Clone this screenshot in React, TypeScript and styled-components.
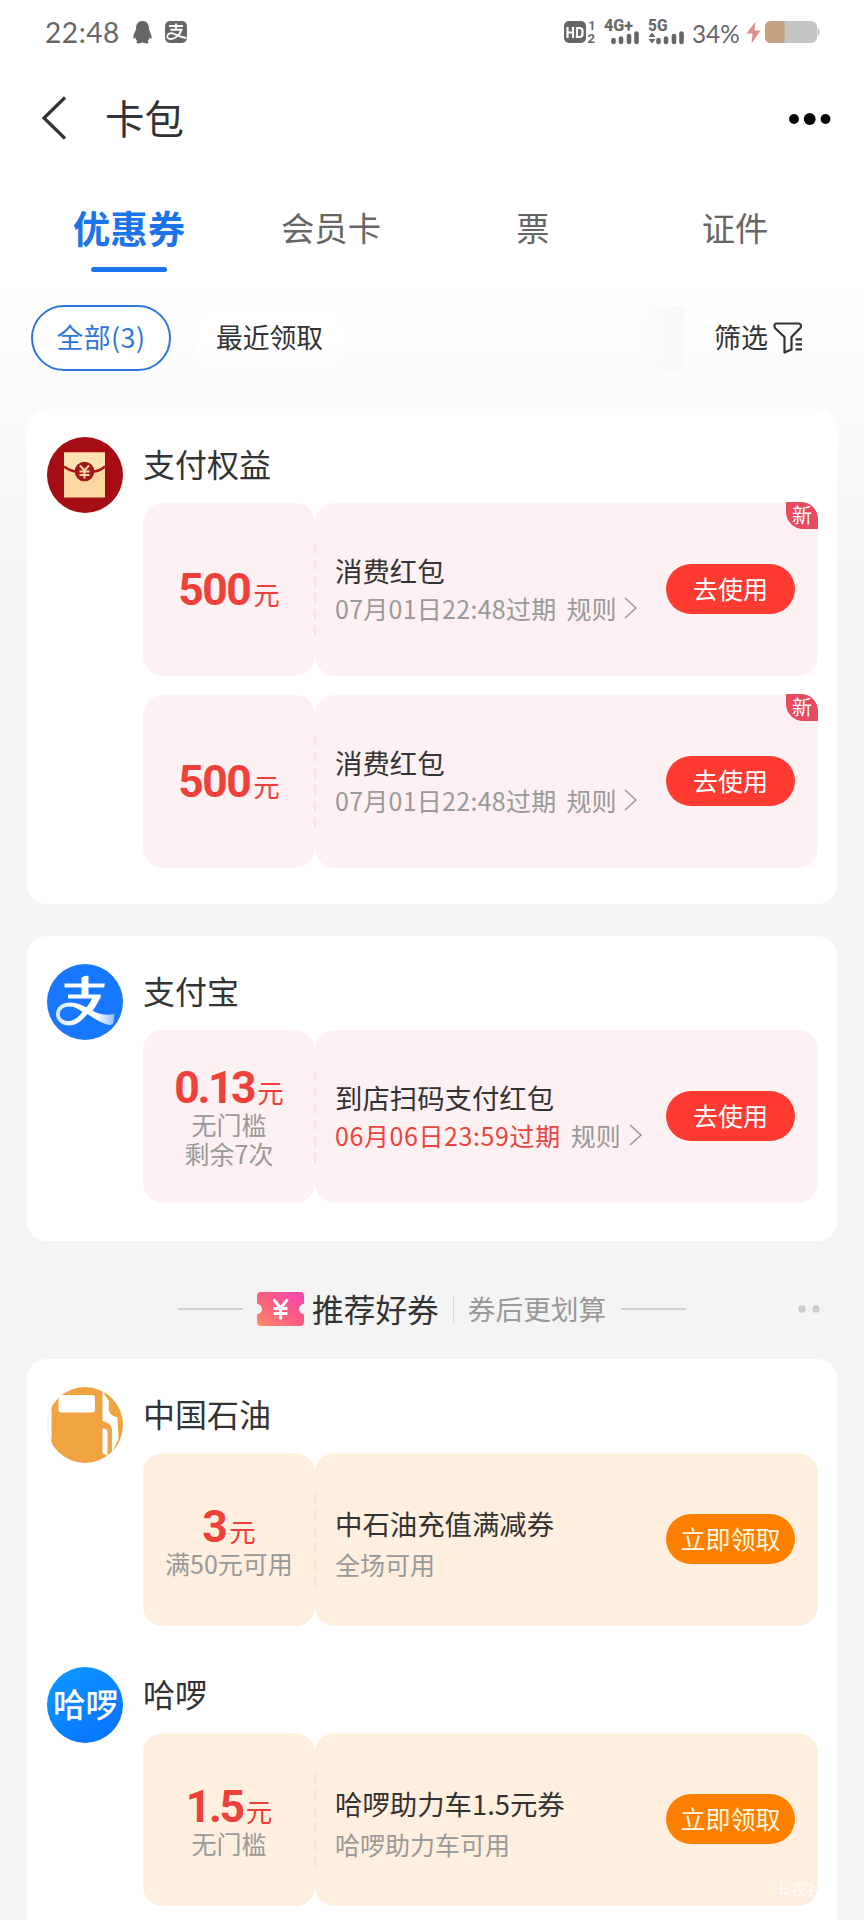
import React from 'react';
import styled, { createGlobalStyle, css } from 'styled-components';

const GlobalStyle = createGlobalStyle`
  * { box-sizing: border-box; }
  body { margin: 0; background: #f4f4f4; }
`;

type Tone = 'red' | 'orange';

const tones = {
  red: { bg: '#fdf1f3', dash: '#f6e3e6', button: '#ff3a30', label: '#ffffff' },
  orange: { bg: '#ffefdf', dash: '#fadfd0', button: '#ff8000', label: '#fff6dc' },
};

const Page = styled.div`
  position: relative;
  width: 864px;
  height: 1920px;
  overflow: hidden;
  background: linear-gradient(180deg, #ffffff 0, #ffffff 280px, #f4f4f4 600px, #f4f4f4 100%);
  font-family: 'Noto Sans CJK SC', sans-serif;
  color: #333;
`;

const StatusBar = styled.header`
  display: flex;
  align-items: center;
  height: 64px;
  padding: 0 44px 0 45px;
  color: #666;
`;

const Clock = styled.span`
  width: 75px;
  margin-right: 13px;
  font: 400 28px/32px Lato, sans-serif;
  letter-spacing: 0.6px;
  white-space: nowrap;
`;

const StatusIcon = styled.svg<{ $gap: number }>`
  display: block;
  flex: none;
  overflow: visible;
  margin-right: ${(p) => p.$gap}px;
  font-family: Roboto, sans-serif;
`;

const StatusRight = styled.div`
  display: flex;
  align-items: center;
  margin-left: auto;
`;

const Percent = styled.span`
  width: 48px;
  margin: 3px 6px 0 0;
  font: 400 24.3px/30px Lato, sans-serif;
  white-space: nowrap;
`;

const TitleBar = styled.div`
  display: flex;
  align-items: center;
  height: 108px;
  padding: 0 33px 0 41px;
`;

const PageTitle = styled.h1`
  flex: 1;
  margin: 0 0 2px 38px;
  font-size: 39.5px;
  line-height: 56px;
  font-weight: 400;
`;

const MoreDots = styled.svg`
  margin-top: 1px;
`;

const Tabs = styled.nav`
  display: grid;
  grid-template-columns: repeat(4, 202px);
  padding: 0 28px;
  height: 124px;
`;

const Tab = styled.div<{ $active?: boolean }>`
  display: flex;
  flex-direction: column;
  align-items: center;
  padding-top: 28px;
  font-size: ${(p) => (p.$active ? 37.5 : 33.3)}px;
  font-weight: ${(p) => (p.$active ? 700 : 400)};
  line-height: 54px;
  color: ${(p) => (p.$active ? '#1b74ea' : '#666')};
  ${(p) =>
    p.$active &&
    css`
      &::after {
        content: '';
        width: 76px;
        height: 5px;
        margin-top: 13px;
        border-radius: 3px;
        background: currentColor;
      }
    `}
`;

const Filters = styled.div`
  display: flex;
  align-items: center;
  height: 84px;
  margin-bottom: 29px;
  padding: 0 61px 0 31px;
`;

const Chip = styled.div<{ $selected?: boolean }>`
  display: flex;
  align-items: center;
  justify-content: center;
  width: ${(p) => (p.$selected ? 140 : 157)}px;
  height: 66px;
  margin-right: 20px;
  padding-bottom: 2px;
  border: 2px solid ${(p) => (p.$selected ? '#2c77d8' : 'transparent')};
  border-radius: 33px;
  background: ${(p) => (p.$selected ? '#fff' : 'rgba(255,255,255,.7)')};
  background-clip: padding-box;
  color: ${(p) => (p.$selected ? '#2c77d8' : '#333')};
  font-size: 26.8px;
  letter-spacing: ${(p) => (p.$selected ? 0.5 : 0)}px;
  line-height: 40px;
`;

const FadeEdge = styled.div`
  width: 50px;
  height: 65px;
  margin: 0 30px 0 auto;
  background: linear-gradient(90deg, rgba(247, 247, 247, 0), #f8f8f8);
`;

const FilterButton = styled.div`
  display: flex;
  align-items: center;
  gap: 5px;
  font-size: 27px;
  line-height: 40px;
`;

const FilterLabel = styled.span`
  margin-bottom: 2px;
`;

const Card = styled.section<{ $height: number }>`
  margin: 0 27px 32px;
  height: ${(p) => p.$height}px;
  border-radius: 20px;
  background: #fff;
`;

const Shop = styled.article`
  display: grid;
  grid-template-columns: 96px 675px;
  padding: 28px 0 0 20px;
  height: 280px;
`;

const Logo = styled.svg`
  display: block;
  width: 76px;
  height: 76px;
`;

const ShopTitle = styled.h2`
  margin: 2px 0 15px;
  font-size: 32px;
  line-height: 49px;
  font-weight: 400;
`;

const Coupons = styled.div`
  display: flex;
  flex-direction: column;
  gap: 19.5px;
`;

const CouponBox = styled.div<{ $tone: Tone }>`
  position: relative;
  display: grid;
  grid-template-columns: 172px 503px;
  height: 172.5px;
  > div { background: ${(p) => tones[p.$tone].bg}; }
`;

const Amount = styled.div<{ $drop: number }>`
  display: flex;
  flex-direction: column;
  align-items: center;
  justify-content: center;
  padding-top: ${(p) => p.$drop}px;
  border-radius: 20px;
`;

const Value = styled.div`
  display: flex;
  align-items: baseline;
  height: 42px;
  margin-bottom: 1.5px;
  color: #f0403a;
  font-size: 26.5px;
  line-height: 42px;
`;

const Digits = styled.b<{ $tight: boolean }>`
  margin-right: 3px;
  font: 700 44.5px/42px Roboto, sans-serif;
  letter-spacing: ${(p) => (p.$tight ? -2.4 : -1.5)}px;
`;

const Condition = styled.div`
  color: #999;
  font-size: 25px;
  line-height: 29px;
  white-space: nowrap;
`;

const Body = styled.div`
  display: flex;
  align-items: center;
  justify-content: space-between;
  padding: 0 23px 0 20px;
  border-radius: 20px;
`;

const Details = styled.div<{ $drop: number }>`
  padding-top: ${(p) => p.$drop}px;
  padding-bottom: 1px;
`;

const CouponTitle = styled.div`
  font-size: 27.4px;
  line-height: 38px;
  white-space: nowrap;
`;

const CouponMeta = styled.div<{ $offset: number }>`
  display: flex;
  align-items: center;
  margin-top: ${(p) => p.$offset}px;
  color: #999;
  font-size: 25px;
  line-height: 38px;
  white-space: nowrap;
`;

const Expiry = styled.span<{ $urgent?: boolean }>`
  margin-right: 10px;
  letter-spacing: ${(p) => (p.$urgent ? 0.6 : 0.27)}px;
  color: ${(p) => (p.$urgent ? '#ec443f' : '#999')};
`;

const MetaArrow = styled.svg`
  margin-left: 7px;
`;

const Action = styled.button<{ $tone: Tone }>`
  width: 129px;
  height: 50px;
  padding: 0 0 3px;
  border: 0;
  border-radius: 25px;
  background: ${(p) => tones[p.$tone].button};
  color: ${(p) => tones[p.$tone].label};
  font: 400 25px/40px 'Noto Sans CJK SC', sans-serif;
`;

const Perforation = styled.i<{ $tone: Tone }>`
  position: absolute;
  left: 171px;
  top: 41px;
  width: 2px;
  height: 93px;
  background: repeating-linear-gradient(180deg, ${(p) => tones[p.$tone].dash} 0 10px, transparent 10px 16.5px);
`;

const NewBadge = styled.span`
  position: absolute;
  top: -1px;
  right: 0;
  width: 32px;
  height: 27px;
  border-radius: 0 17px 0 17px;
  background: #e84a62;
  color: #fff;
  font-size: 20px;
  line-height: 26px;
  text-align: center;
`;

const Recommend = styled.div`
  display: flex;
  align-items: center;
  height: 54px;
  margin: 41px 0 23px;
  padding: 0 44px 0 178px;
`;

const Rule = styled.span`
  width: 65px;
  height: 2px;
  background: #cfcfcf;
`;

const Ticket = styled.svg`
  margin: 0 8px 0 14px;
`;

const RecommendTitle = styled.span`
  margin-bottom: 2px;
  font-size: 31.7px;
  line-height: 54px;
`;

const Separator = styled.span`
  width: 1px;
  height: 27px;
  margin: 0 14px;
  background: #d8d8d8;
`;

const RecommendHint = styled.span`
  margin: 0 15px 2px 0;
  color: #999;
  font-size: 27.7px;
  line-height: 54px;
`;

const Pager = styled.svg`
  margin-left: auto;
`;

const Watermark = styled.span`
  position: absolute;
  left: 773px;
  top: 1876px;
  color: rgba(255, 255, 255, 0.7);
  font-size: 17px;
  line-height: 26px;
`;

const RedPacketLogo = () => (
  <Logo viewBox="0 0 76 76">
    <circle cx="38" cy="38" r="38" fill="#a50c14" />
    <path d="M17 15.5h41v45H17z" fill="#fbd7a2" />
    <path d="M17 15.5h41v14l-20.500 7L17 29.500z" fill="#ffe1b2" />
    <path d="M17 29.500Q24 34.500 30 34.500M58 29.500Q52 34.500 46 34.500" fill="none" stroke="#a3161a" strokeWidth="2.400" />
    <circle cx="37.500" cy="34.500" r="9.800" fill="#a3161a" />
    <path d="M33 28.500l4.500 5 4.500-5M37.500 33.500v8M32.500 34.500h10M32.500 38h10" fill="none" stroke="#fbd7a2" strokeWidth="2" />
  </Logo>
);

const AlipayLogo = () => (
  <Logo viewBox="0 0 76 76">
    <defs>
      <linearGradient id="swoosh" x1="0" x2="1">
        <stop offset="0" stopColor="#cfe3ff" />
        <stop offset=".35" stopColor="#fff" />
        <stop offset=".7" stopColor="#fff" />
        <stop offset="1" stopColor="#8fbfff" />
      </linearGradient>
    </defs>
    <circle cx="38" cy="38" r="38" fill="#1777ff" />
    <path d="M34.500 13.500Q37 11.500 41.500 11.800V33h-7zM17.500 19.500h40.500l-1 4H17.500zM21 30.500h32.500v4H21z" fill="#fff" />
    <path d="M46.500 31H54Q50.500 41 44.500 48L38.500 45Q44 38 46.500 31z" fill="#fff" />
    <path
      d="M40.500 50C35 56.500 29.500 61.500 22 61.500 14 61.500 9 56 9 50 9 43 15 38.500 23 38.500 31 38.500 38.500 42.500 47 47.500 55 51.500 61 51 67.500 50L66.500 58Q65.500 61.500 62 61 55 60 40.500 50zM35.500 48C31 44.500 27 42.500 22.500 42.500 17 42.500 12.800 45.500 12.800 50 12.800 54.500 17 57 21.500 57 27 57 31.500 53 35.500 48z"
      fill="url(#swoosh)"
    />
  </Logo>
);

const PetrolLogo = () => (
  <Logo viewBox="0 0 76 76">
    <defs>
      <clipPath id="petrol"><circle cx="38" cy="38" r="38" /></clipPath>
    </defs>
    <circle cx="38" cy="38" r="37.500" fill="#fff" stroke="#eee" />
    <g clipPath="url(#petrol)">
      <path d="M4.500 0H76V76H4.500z" fill="#efa441" />
      <rect x="11.500" y="8" width="36.500" height="17.500" rx="3" fill="#fff" />
      <path d="M55.500 3 58 8 62.500 15V25Q63 28 70.500 30.500L71.500 52 65 65V42Q64 36 55.500 34zM55.500 41.500Q60.500 41 60.500 46V69L55.500 66z" fill="#fff" />
      <path d="M58 7 62.500 12V24" fill="none" stroke="#efa441" strokeWidth="1.500" />
    </g>
  </Logo>
);

const HelloLogo = () => (
  <Logo viewBox="0 0 76 76">
    <defs>
      <linearGradient id="hello" x1="0" y1="0" x2=".7" y2="1">
        <stop offset="0" stopColor="#0d9bff" />
        <stop offset="1" stopColor="#0873ff" />
      </linearGradient>
    </defs>
    <circle cx="38" cy="38" r="38" fill="url(#hello)" />
    <text x="38.500" y="49.500" textAnchor="middle" fontSize="32.500" fontWeight="500" fill="#fff">哈啰</text>
  </Logo>
);

type CouponProps = {
  tone: Tone;
  value: string;
  conditions?: string[];
  title: string;
  meta?: string;
  expiry?: string;
  urgent?: boolean;
  fresh?: boolean;
};

const Coupon = ({ tone, value, conditions = [], title, meta, expiry, urgent, fresh }: CouponProps) => (
  <CouponBox $tone={tone}>
    <Amount $drop={conditions.length === 1 ? 5 : 2}>
      <Value><Digits $tight={value.includes('.')}>{value}</Digits>元</Value>
      {conditions.map((c) => <Condition key={c}>{c}</Condition>)}
    </Amount>
    <Body>
      <Details $drop={expiry ? 0 : 9}>
        <CouponTitle>{title}</CouponTitle>
        <CouponMeta $offset={expiry ? 0 : 3}>
          {expiry ? (
            <>
              <Expiry $urgent={urgent}>{expiry}</Expiry>规则
              <MetaArrow width="15" height="22" viewBox="0 0 15 22">
                <path d="M2 1 13 11 2 21" fill="none" stroke="#999" strokeWidth="1.500" />
              </MetaArrow>
            </>
          ) : meta}
        </CouponMeta>
      </Details>
      <Action $tone={tone}>{tone === 'red' ? '去使用' : '立即领取'}</Action>
    </Body>
    <Perforation $tone={tone} />
    {fresh && <NewBadge>新</NewBadge>}
  </CouponBox>
);

export default function App() {
  return (
    <Page>
      <GlobalStyle />
      <StatusBar>
        <Clock>22:48</Clock>
        <StatusIcon $gap={13} width="19" height="23" viewBox="0 0 19 23">
          <path d="M9.500 0C5 0 3 3.500 3 7.500 3 10 .3 13 .3 16.500c0 1.500 1 1.500 2 0 .4 1.500 1 2.600 2 3.500-1.500.8-1 2.500 1.200 2.500 1.800 0 3.200-.5 4-1.200.8.700 2.200 1.200 4 1.200 2.200 0 2.700-1.700 1.200-2.500 1-.9 1.600-2 2-3.500 1 1.500 2 1.500 2 0C18.700 13 16 10 16 7.500 16 3.500 14 0 9.500 0z" fill="#666" />
        </StatusIcon>
        <StatusIcon $gap={0} width="22" height="22" viewBox="0 0 22 22">
          <rect width="22" height="22" rx="5" fill="#666" />
          <path d="M11 2.500v6M4 5h14M5.500 8.800h11C15 13.500 10.500 18 6 18c-3.500 0-4.500-2-3.500-3.800C4 11.500 8 12 11.500 13.800 15 15.500 18 16.500 21.500 17" fill="none" stroke="#fff" strokeWidth="1.900" />
        </StatusIcon>
        <StatusRight>
          <StatusIcon $gap={8} width="32" height="24" viewBox="0 0 32 24">
            <rect y="1" width="22" height="22" rx="5" fill="#666" />
            <path d="M3.500 7v11M9 7v11M3.500 12.500H9M13 8v9h2.500q3 0 3-3v-3q0-3-3-3z" fill="none" stroke="#fff" strokeWidth="2.200" />
            <text x="24.500" y="9.500" fontSize="12" fontWeight="700" fill="#666">1</text>
            <text x="23.500" y="22.800" fontSize="13" fontWeight="700" fill="#666">2</text>
          </StatusIcon>
          <StatusIcon $gap={8} width="36" height="26" viewBox="0 0 36 26">
            <text x="0" y="12" fontSize="16.500" fontWeight="800" fill="#666" textLength="29" lengthAdjust="spacingAndGlyphs">4G+</text>
            <path d="M9.500 21v2M17 19.500v3.500M25 17v6M32.500 14.500V23" stroke="#666" strokeWidth="4.600" strokeLinecap="round" />
          </StatusIcon>
          <StatusIcon $gap={7} width="37" height="26" viewBox="0 0 37 26">
            <text x="0" y="12" fontSize="16.500" fontWeight="800" fill="#666" textLength="19.500" lengthAdjust="spacingAndGlyphs">5G</text>
            <path d="M10.500 21v2M18 19.500v3.500M26 17v6M33.500 14.500V23" stroke="#666" strokeWidth="4.600" strokeLinecap="round" />
            <path d="M.5 18 4 13.500 7.500 18zM.5 20 4 24.500 7.500 20z" fill="#666" />
          </StatusIcon>
          <Percent>34%</Percent>
          <StatusIcon $gap={4} width="15" height="23" viewBox="0 0 15 23">
            <path d="M9.500 .5 .5 12.500H6.500L5.500 22.500 14.500 9.500H8.500z" fill="#dd8d8a" />
          </StatusIcon>
          <StatusIcon $gap={0} width="55" height="22" viewBox="0 0 55 22">
            <rect width="52" height="22" rx="6" fill="#c5c5c3" />
            <path d="M6 0H19.500V22H6Q0 22 0 16V6Q0 0 6 0z" fill="#c4a382" />
            <path d="M52.500 7Q54.500 7 54.500 11T52.500 15z" fill="#c5c5c3" />
          </StatusIcon>
        </StatusRight>
      </StatusBar>

      <TitleBar>
        <svg width="26" height="44" viewBox="0 0 26 44">
          <path d="M24 1.500 3 22 24 42.500" fill="none" stroke="#333" strokeWidth="3.200" />
        </svg>
        <PageTitle>卡包</PageTitle>
        <MoreDots width="42" height="14" viewBox="0 0 42 14">
          <circle cx="5" cy="7" r="4.900" />
          <circle cx="20.700" cy="7" r="5.900" />
          <circle cx="36.500" cy="7" r="4.900" />
        </MoreDots>
      </TitleBar>

      <Tabs>
        <Tab $active>优惠券</Tab>
        <Tab>会员卡</Tab>
        <Tab>票</Tab>
        <Tab>证件</Tab>
      </Tabs>

      <Filters>
        <Chip $selected>全部(3)</Chip>
        <Chip>最近领取</Chip>
        <FadeEdge />
        <FilterButton>
          <FilterLabel>筛选</FilterLabel>
          <svg width="30" height="34" viewBox="0 0 30 34" fill="none" stroke="#333" strokeWidth="2.200">
            <path d="M3 2.500H26Q28.500 3 27.800 6.500L18.500 16V28.500L11.500 31.500V16L2 7Q.5 3.500 3 2.500z" strokeLinejoin="round" />
            <path d="M22.500 18.300H29M22.500 23.300H29M22.500 28.300H29" />
          </svg>
        </FilterButton>
      </Filters>

      <Card $height={495}>
        <Shop>
          <RedPacketLogo />
          <div>
            <ShopTitle>支付权益</ShopTitle>
            <Coupons>
              <Coupon tone="red" value="500" title="消费红包" expiry="07月01日22:48过期" fresh />
              <Coupon tone="red" value="500" title="消费红包" expiry="07月01日22:48过期" fresh />
            </Coupons>
          </div>
        </Shop>
      </Card>

      <Card $height={305}>
        <Shop>
          <AlipayLogo />
          <div>
            <ShopTitle>支付宝</ShopTitle>
            <Coupon tone="red" value="0.13" conditions={['无门槛', '剩余7次']} title="到店扫码支付红包" expiry="06月06日23:59过期" urgent />
          </div>
        </Shop>
      </Card>

      <Recommend>
        <Rule />
        <Ticket width="47" height="34" viewBox="0 0 47 34">
          <defs>
            <linearGradient id="ticket" x1="0" y1="1" x2="1" y2="0">
              <stop offset="0" stopColor="#ff8c68" />
              <stop offset=".5" stopColor="#fb5c80" />
              <stop offset="1" stopColor="#f445b4" />
            </linearGradient>
          </defs>
          <path d="M4 0H43Q47 0 47 4V11.500Q42 13 42 17T47 22.500V30Q47 34 43 34H4Q0 34 0 30V22.500Q5 21 5 17T0 11.500V4Q0 0 4 0z" fill="url(#ticket)" />
          <path d="M16.500 7.500 23.500 16 30.500 7.500M23.500 16V27.500M16.500 16.500H30.500M16.500 21.500H30.500" fill="none" stroke="#fff" strokeWidth="3" />
        </Ticket>
        <RecommendTitle>推荐好券</RecommendTitle>
        <Separator />
        <RecommendHint>券后更划算</RecommendHint>
        <Rule />
        <Pager width="22" height="8" viewBox="0 0 22 8" fill="#ccc">
          <circle cx="4" cy="4" r="3.700" />
          <circle cx="18" cy="4" r="3.700" />
        </Pager>
      </Recommend>

      <Card $height={600}>
        <Shop>
          <PetrolLogo />
          <div>
            <ShopTitle>中国石油</ShopTitle>
            <Coupon tone="orange" value="3" conditions={['满50元可用']} title="中石油充值满减券" meta="全场可用" />
          </div>
        </Shop>
        <Shop>
          <HelloLogo />
          <div>
            <ShopTitle>哈啰</ShopTitle>
            <Coupon tone="orange" value="1.5" conditions={['无门槛']} title="哈啰助力车1.5元券" meta="哈啰助力车可用" />
          </div>
        </Shop>
      </Card>
      <Watermark>卡农社区</Watermark>
    </Page>
  );
}
